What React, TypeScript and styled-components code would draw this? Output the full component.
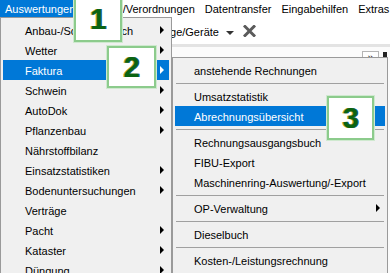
import React from 'react'
import styled, { createGlobalStyle, css } from 'styled-components'

const GlobalStyle = createGlobalStyle`
  html, body {
    margin: 0;
    padding: 0;
    background: #ffffff;
  }
  body {
    font-family: "Liberation Sans", Arial, sans-serif;
    font-size: 11px;
    color: #000;
  }
`

type Entry = { label: string; sub?: boolean; active?: boolean; sep?: boolean }

const mainItems: Entry[] = [
  { label: 'Anbau-/Schlagbereich', sub: true },
  { label: 'Wetter', sub: true },
  { label: 'Faktura', sub: true, active: true },
  { label: 'Schwein', sub: true },
  { label: 'AutoDok', sub: true },
  { label: 'Pflanzenbau', sub: true },
  { label: 'Nährstoffbilanz' },
  { label: 'Einsatzstatistiken', sub: true },
  { label: 'Bodenuntersuchungen', sub: true },
  { label: 'Verträge' },
  { label: 'Pacht', sub: true },
  { label: 'Kataster', sub: true },
  { label: 'Düngung', sub: true },
]

const fakturaItems: Entry[] = [
  { label: 'anstehende Rechnungen' },
  { label: '', sep: true },
  { label: 'Umsatzstatistik' },
  { label: 'Abrechnungsübersicht', active: true },
  { label: '', sep: true },
  { label: 'Rechnungsausgangsbuch' },
  { label: 'FIBU-Export' },
  { label: 'Maschinenring-Auswertung/-Export' },
  { label: '', sep: true },
  { label: 'OP-Verwaltung', sub: true },
  { label: '', sep: true },
  { label: 'Dieselbuch' },
  { label: '', sep: true },
  { label: 'Kosten-/Leistungsrechnung' },
]

const menuBar = [
  { label: 'Auswertungen', active: true },
  { label: 'Auflage/Verordnungen' },
  { label: 'Datentransfer' },
  { label: 'Eingabehilfen' },
  { label: 'Extras' },
]

const App = () => {
  return (
    <Screen>
      <GlobalStyle />

      <MenuBar>
        {menuBar.map(m => (
          <BarItem key={m.label} $active={m.active}>{m.label}</BarItem>
        ))}
      </MenuBar>

      <Toolbar>
        <ToolLabel>Anlage/Geräte</ToolLabel>
        <DropArrow />
        <CloseIcon width="13" height="12" viewBox="0 0 13 12">
          <path d="M2 1.5 L11 10.5 M11 1.5 L2 10.5" stroke="#5b5b5b" strokeWidth="3" strokeLinecap="square" />
        </CloseIcon>
      </Toolbar>

      <PanelHead>
        <ChevronButton>»</ChevronButton>
        <PinGlyph />
      </PanelHead>

      <MainMenu>
        {mainItems.map(item => (
          <MenuItem key={item.label} $active={item.active} $indent={22}>
            {item.label}
            {item.sub && <SubArrow $active={item.active} />}
          </MenuItem>
        ))}
      </MainMenu>

      <SubMenu>
        {fakturaItems.map((item, i) =>
          item.sep ? (
            <Separator key={i} />
          ) : (
            <MenuItem key={item.label} $active={item.active} $indent={19}>
              {item.label}
              {item.sub && <SubArrow $active={item.active} />}
            </MenuItem>
          )
        )}
      </SubMenu>

      <Callout $x={74} $y={-3} $w={48} $h={45}><Digit>1</Digit></Callout>
      <Callout $x={107} $y={46} $w={49} $h={42}><Digit>2</Digit></Callout>
      <Callout $x={327} $y={96} $w={47} $h={44}><Digit>3</Digit></Callout>
    </Screen>
  )
}

const Screen = styled.div`
  position: relative;
  width: 390px;
  height: 273px;
  overflow: hidden;
  background: #ffffff;
`

const MenuBar = styled.div`
  display: flex;
  height: 17px;
  white-space: nowrap;
`

const BarItem = styled.div<{ $active?: boolean }>`
  padding: 1px 5px 0;
  line-height: 16px;
  ${({ $active }) => $active && css`
    background: #0078d7;
    color: #fff;
  `}
`

const Toolbar = styled.div`
  display: flex;
  align-items: center;
  height: 27px;
  padding: 3px 0 0 148px;
  box-sizing: border-box;
  white-space: nowrap;
`

const ToolLabel = styled.span`
  line-height: 14px;
`

const DropArrow = styled.span`
  margin: 1px 0 0 7px;
  border-top: 4px solid #333;
  border-left: 4px solid transparent;
  border-right: 4px solid transparent;
`

const CloseIcon = styled.svg`
  margin-left: 9px;
  margin-top: -2px;
`

const PanelHead = styled.div`
  display: flex;
  justify-content: flex-end;
  align-items: flex-start;
  height: 229px;
  border-top: 3px solid #e3e3e3;
  padding: 4px 3px 0 0;
  box-sizing: border-box;
  gap: 4px;
  background: #fbfbfb;
`

const ChevronButton = styled.div`
  width: 15px;
  height: 12px;
  border: 1px solid #b5b5b5;
  font-size: 11px;
  line-height: 10px;
  text-align: center;
  background: #fff;
`

const PinGlyph = styled.div`
  width: 4px;
  height: 6px;
  margin-top: 1px;
  background: #222;
`

const menuPanel = css`
  position: absolute;
  box-sizing: border-box;
  background: #f0f0f0;
  border: 1px solid #9a9a9a;
  padding: 2px;
`

const MainMenu = styled.div`
  ${menuPanel};
  left: 0;
  top: 17px;
  width: 172px;
  height: 280px;
`

const SubMenu = styled.div`
  ${menuPanel};
  left: 172px;
  top: 57px;
  width: 216px;
  height: 230px;
`

const MenuItem = styled.div<{ $active?: boolean; $indent: number }>`
  position: relative;
  height: 20px;
  line-height: 22px;
  padding-left: ${({ $indent }) => $indent}px;
  white-space: nowrap;
  overflow: hidden;
  ${({ $active }) => $active && css`
    background: #0078d7;
    color: #fff;
  `}
`

const SubArrow = styled.span<{ $active?: boolean }>`
  position: absolute;
  right: 5px;
  top: 6px;
  border-left: 4px solid ${({ $active }) => ($active ? '#fff' : '#000')};
  border-top: 4px solid transparent;
  border-bottom: 4px solid transparent;
`

const Separator = styled.div`
  margin: 3px 1px 2px;
  border-top: 1px solid #a0a0a0;
`

const Callout = styled.div<{ $x: number; $y: number; $w: number; $h: number }>`
  position: absolute;
  left: ${({ $x }) => $x}px;
  top: ${({ $y }) => $y}px;
  width: ${({ $w }) => $w}px;
  height: ${({ $h }) => $h}px;
  box-sizing: border-box;
  background: #fff;
  border: 2px solid #8ccb8c;
  box-shadow: 0 0 0 1px #cfe9cf;
  display: flex;
  align-items: center;
  justify-content: center;
`

const Digit = styled.span`
  font-family: "Liberation Sans", Arial, sans-serif;
  font-weight: bold;
  font-size: 29px;
  line-height: 1;
  color: #0a6412;
  text-shadow: -1px 0 0 #b7a83a, 1px 0 0 #1d5a6a;
`

export default App
